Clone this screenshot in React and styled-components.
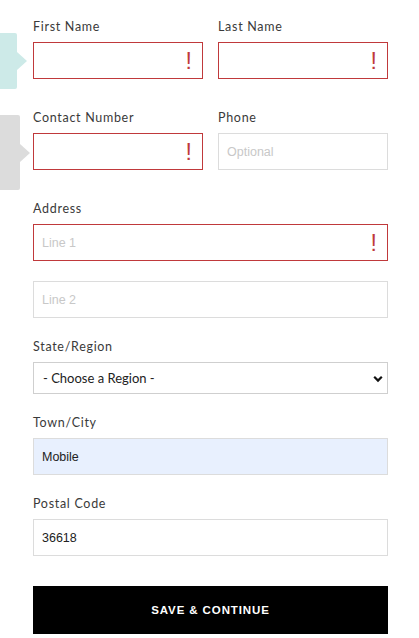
import React from 'react';
import styled, { createGlobalStyle } from 'styled-components';

const GlobalStyle = createGlobalStyle`
    body {
        margin: 0;
        background: #fff;
        font-family: "Lato", "Liberation Sans", Arial, sans-serif;
        color: #333;
    }
`;

export default function App() {
    return (
        <Page>
            <GlobalStyle />
            <Tabs>
                <Tab $color="#cdeae8" $top={33} $height={56} $width={17} />
                <Tab $color="#dcdcdc" $top={115} $height={75} $width={20} />
            </Tabs>
            <Form onSubmit={(e) => e.preventDefault()}>
                <Row $gap={30}>
                    <Field label="First Name" error />
                    <Field label="Last Name" error />
                </Row>
                <Row $gap={30}>
                    <Field label="Contact Number" error />
                    <Field label="Phone" placeholder="Optional" />
                </Row>
                <Group $gap={20}>
                    <Label>Address</Label>
                    <InputWrap $error>
                        <Input placeholder="Line 1" />
                        <Bang>!</Bang>
                    </InputWrap>
                </Group>
                <Group $gap={20}>
                    <InputWrap>
                        <Input placeholder="Line 2" />
                    </InputWrap>
                </Group>
                <Group $gap={20}>
                    <Label>State/Region</Label>
                    <SelectWrap>
                        <Select defaultValue="">
                            <option value="">- Choose a Region -</option>
                        </Select>
                        <Chevron viewBox="0 0 10 8">
                            <path d="M1.2 1.8 L5 5.6 L8.8 1.8" fill="none" stroke="#111" strokeWidth="2.2" />
                        </Chevron>
                    </SelectWrap>
                </Group>
                <Group $gap={20}>
                    <Label>Town/City</Label>
                    <InputWrap $filled>
                        <Input defaultValue="Mobile" />
                    </InputWrap>
                </Group>
                <Group $gap={30}>
                    <Label>Postal Code</Label>
                    <InputWrap>
                        <Input defaultValue="36618" />
                    </InputWrap>
                </Group>
                <Button type="submit">Save &amp; Continue</Button>
            </Form>
        </Page>
    );
}

function Field({ label, error, placeholder }) {
    return (
        <Group>
            <Label>{label}</Label>
            <InputWrap $error={error}>
                <Input placeholder={placeholder} />
                {error && <Bang>!</Bang>}
            </InputWrap>
        </Group>
    );
}

const Page = styled.div`
    position: relative;
    width: 419px;
    min-height: 638px;
`;

const Tabs = styled.div`
    position: absolute;
    left: 0;
    top: 0;
`;

const Tab = styled.div`
    position: absolute;
    left: 0;
    top: ${(p) => p.$top}px;
    width: ${(p) => p.$width}px;
    height: ${(p) => p.$height}px;
    background: ${(p) => p.$color};
    border-radius: 0 2px 2px 0;
    &::after {
        content: '';
        position: absolute;
        left: 100%;
        top: 50%;
        transform: translateY(-50%);
        border-top: 9px solid transparent;
        border-bottom: 9px solid transparent;
        border-left: 10px solid ${(p) => p.$color};
    }
`;

const Form = styled.form`
    display: flex;
    flex-direction: column;
    width: 355px;
    margin-left: 33px;
    padding-top: 18px;
`;

const Row = styled.div`
    display: grid;
    grid-template-columns: 170px 170px;
    column-gap: 15px;
    margin-bottom: ${(p) => p.$gap || 0}px;
`;

const Group = styled.div`
    display: flex;
    flex-direction: column;
    margin-bottom: ${(p) => p.$gap || 0}px;
`;

const Label = styled.label`
    display: block;
    height: 18px;
    line-height: 18px;
    margin-bottom: 6px;
    font-size: 12.5px;
    letter-spacing: 0.7px;
    color: #3a3a3a;
`;

const InputWrap = styled.div`
    position: relative;
    display: flex;
    align-items: center;
    height: 37px;
    box-sizing: border-box;
    border: 1px solid ${(p) => (p.$error ? '#c0393b' : '#dcdcdc')};
    background: ${(p) => (p.$filled ? '#e8f0fe' : '#fff')};
`;

const Input = styled.input`
    flex: 1;
    min-width: 0;
    height: 100%;
    border: 0;
    outline: none;
    background: transparent;
    padding: 0 8px;
    font-family: "Liberation Sans", Arial, sans-serif;
    font-size: 12.5px;
    color: #222;
    &::placeholder {
        color: #c8c8c8;
    }
`;

const Bang = styled.span`
    position: absolute;
    right: 10px;
    top: 50%;
    transform: translateY(-50%);
    font-family: "Liberation Sans", Arial, sans-serif;
    font-size: 23px;
    font-weight: 400;
    color: #c0393b;
    line-height: 1;
`;

const SelectWrap = styled.div`
    position: relative;
    height: 32px;
`;

const Select = styled.select`
    width: 100%;
    height: 32px;
    appearance: none;
    border: 1px solid #cfcfcf;
    border-radius: 0;
    background: #fff;
    padding: 0 9px;
    font-family: "Lato", "Liberation Sans", Arial, sans-serif;
    font-size: 13px;
    color: #222;
    outline: none;
`;

const Chevron = styled.svg`
    position: absolute;
    right: 5px;
    top: 13px;
    width: 10px;
    height: 8px;
    pointer-events: none;
`;

const Button = styled.button`
    height: 48px;
    border: 0;
    background: #000;
    color: #fff;
    font-family: "Liberation Sans", Arial, sans-serif;
    font-size: 11.5px;
    font-weight: 700;
    letter-spacing: 0.9px;
    text-transform: uppercase;
    cursor: pointer;
`;
